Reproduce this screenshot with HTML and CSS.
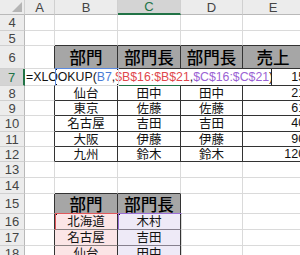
FILE: index.html
```html
<!DOCTYPE html>
<html lang="ja">
<head>
    <meta charset="UTF-8">
    <title>XLOOKUP</title>
    <link rel="stylesheet" href="styles.css">
</head>
<body>

    <div class="sheet">
        <!-- column headers -->
        <div class="row hdr">
            <div class="corner">
                <svg width="10" height="10" viewBox="0 0 10 10"><polygon points="10,0 10,10 0,10" fill="#b5b5b5"/></svg>
            </div>
            <div>A</div>
            <div>B</div>
            <div class="sel">C</div>
            <div>D</div>
            <div class="ecol">E</div>
        </div>

        <div class="row h16">
            <div class="rh">4</div><div></div><div></div><div></div><div></div><div></div>
        </div>
        <div class="row h15">
            <div class="rh">5</div><div></div><div class="tt"></div><div class="tt"></div><div class="tt"></div><div class="tt"></div>
        </div>
        <div class="row h23">
            <div class="rh">6</div><div class="tl"></div>
            <div class="th">部門</div><div class="th">部門長</div><div class="th">部門長</div><div class="th ecol">売上</div>
        </div>

        <!-- row 7 is being edited -->
        <div class="row h17">
            <div class="rh rsel">7</div><div class="tl"></div>
            <div class="t"></div><div class="t csel"></div><div class="t"></div><div class="t num">15000</div>
            <div class="edit">=XLOOKUP(<span class="blue">B7</span>,<span class="red">$B$16:$B$21</span>,<span class="purple">$C$16:$C$21</span>)</div>
            <div class="range blue-box">
                <i class="hd tl-h"></i><i class="hd tr-h"></i><i class="hd bl-h"></i><i class="hd br-h"></i>
            </div>
        </div>

        <div class="row h15">
            <div class="rh">8</div><div class="tl"></div>
            <div class="t">仙台</div><div class="t">田中</div><div class="t">田中</div><div class="t num">21000</div>
        </div>
        <div class="row h15">
            <div class="rh">9</div><div class="tl"></div>
            <div class="t">東京</div><div class="t">佐藤</div><div class="t">佐藤</div><div class="t num">61000</div>
        </div>
        <div class="row h16">
            <div class="rh">10</div><div class="tl"></div>
            <div class="t">名古屋</div><div class="t">吉田</div><div class="t">吉田</div><div class="t num">40000</div>
        </div>
        <div class="row h15">
            <div class="rh">11</div><div class="tl"></div>
            <div class="t">大阪</div><div class="t">伊藤</div><div class="t">伊藤</div><div class="t num">90000</div>
        </div>
        <div class="row h15">
            <div class="rh">12</div><div class="tl"></div>
            <div class="t">九州</div><div class="t">鈴木</div><div class="t">鈴木</div><div class="t num">120000</div>
        </div>
        <div class="row h16">
            <div class="rh">13</div><div></div><div></div><div></div><div></div><div></div>
        </div>
        <div class="row h16">
            <div class="rh">14</div><div></div><div class="tt"></div><div class="tt"></div><div></div><div></div>
        </div>
        <div class="row h20">
            <div class="rh">15</div><div class="tl"></div>
            <div class="th">部門</div><div class="th">部門長</div><div></div><div></div>
        </div>

        <!-- lookup table, outlined by the formula ranges -->
        <div class="row h16">
            <div class="rh">16</div><div class="tl"></div>
            <div class="t pk">北海道</div><div class="t lv">木村</div><div></div><div></div>
            <div class="range red-box">
                <i class="hd tl-h"></i><i class="hd tr-h"></i>
            </div>
            <div class="range purple-box">
                <i class="hd tl-h"></i><i class="hd tr-h"></i>
            </div>
        </div>
        <div class="row h16">
            <div class="rh">17</div><div class="tl"></div>
            <div class="t pk">名古屋</div><div class="t lv">吉田</div><div></div><div></div>
        </div>
        <div class="row h16">
            <div class="rh">18</div><div class="tl"></div>
            <div class="t pk">仙台</div><div class="t lv">田中</div><div></div><div></div>
        </div>
    </div>

</body>
</html>
```

FILE: styles.css
```css
body {
    margin: 0;
    background: #fff;
    overflow: hidden;
    font-family: "Noto Sans CJK JP", "Noto Sans", sans-serif;
}

.sheet {
    width: 330px;
}

/* every sheet row shares the same columns */
.row {
    display: grid;
    grid-template-columns: 25px 30px 63px 63px 62px 87px;
    position: relative;
}

.row > div {
    box-sizing: border-box;
    border-right: 1px solid #dadada;
    border-bottom: 1px solid #dadada;
    display: flex;
    align-items: center;
    justify-content: center;
    overflow: hidden;
    white-space: nowrap;
    font-size: 12.5px;
    line-height: 1;
    color: #111;
}

.hdr { height: 15px; }
.h15 { height: 15px; }
.h16 { height: 16px; }
.h17 { height: 17px; }
.h20 { height: 20px; }
.h23 { height: 23px; }

/* column and row headings */
.hdr > div {
    background: #ececec;
    color: #444;
    font-family: "Liberation Sans", sans-serif;
    font-size: 13px;
    border-right-color: #d0d0d0;
    border-bottom-color: #b9b9b9;
}

.hdr > .corner {
    justify-content: flex-end;
    align-items: flex-end;
    padding: 0 2px 2px 0;
}

.hdr > .sel {
    background: #d4d4d4;
    color: #217346;
    border-bottom: 2px solid #217346;
}

/* E runs past the window, so its centred text sits on the visible part */
.row > .ecol {
    padding-right: 26px;
}

.row > .rh {
    background: #ececec;
    color: #444;
    font-family: "Liberation Sans", sans-serif;
    font-size: 13px;
    border-right-color: #b9b9b9;
    border-bottom-color: #d0d0d0;
}

.row > .rsel {
    background: #d4d4d4;
    color: #217346;
    border-right: 2px solid #217346;
}

/* table borders */
.row > .tt { border-bottom-color: #333; }
.row > .tl { border-right-color: #333; }

.row > .th,
.row > .t {
    border-right-color: #333;
    border-bottom-color: #333;
}

.row > .th {
    background: #a6a6a6;
    color: #000;
    font-size: 16.5px;
    font-weight: 500;
    padding-top: 1px;
}

.row > .num {
    justify-content: flex-end;
    padding-right: 3px;
    font-family: "Liberation Sans", sans-serif;
}

.row > .pk {
    background: #fbe5e6;
    border-bottom-color: #8a8080;
}

.row > .lv {
    background: #eeeaf7;
    border-bottom-color: #86808e;
}

.row > .csel {
    border-bottom: 1px solid #217346;
}

/* in-cell formula editor */
.row > .edit {
    position: absolute;
    left: 26px;
    top: 0;
    width: 246px;
    height: 16px;
    background: #fff;
    justify-content: flex-start;
    border: none;
    border-right: 1px solid #222;
    font-family: "Liberation Sans", sans-serif;
    font-size: 12.3px;
    color: #111;
}

.blue { color: #4a7bd6; }
.red { color: #e0474c; }
.purple { color: #9a62d4; }

/* reference range outlines */
.range {
    position: absolute;
    box-sizing: border-box;
}

.blue-box {
    left: 55px;
    top: -1px;
    width: 64px;
    height: 18px;
    border: 1.5px solid #5b8ae0;
}

.red-box {
    left: 55px;
    top: -1px;
    width: 64px;
    height: 60px;
    border: 1.5px solid #e0585c;
}

.purple-box {
    left: 118px;
    top: -1px;
    width: 64px;
    height: 60px;
    border: 1.5px solid #9b6fd6;
}

.hd {
    position: absolute;
    width: 4px;
    height: 4px;
    background: currentColor;
}

.blue-box { color: #4a7bd6; }
.red-box { color: #d9434a; }
.purple-box { color: #9262d0; }

.tl-h { left: -3px; top: -3px; }
.tr-h { right: -3px; top: -3px; }
.bl-h { left: -3px; bottom: -3px; }
.br-h { right: -3px; bottom: -3px; }
```
